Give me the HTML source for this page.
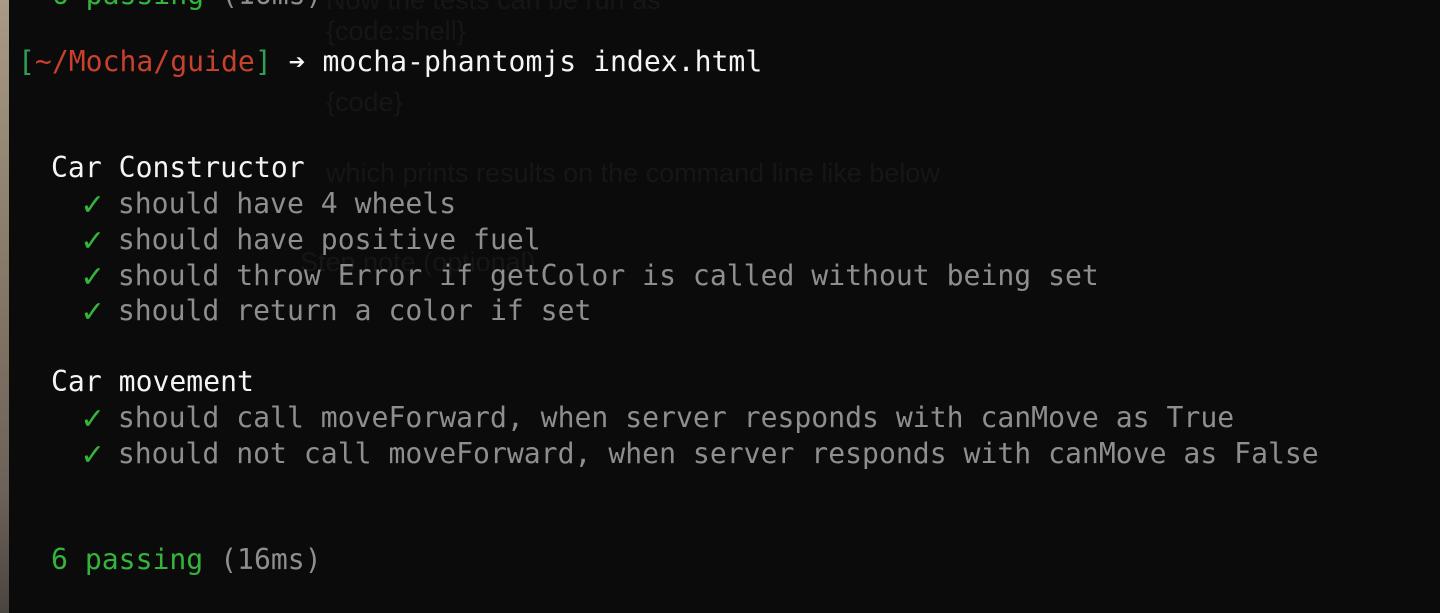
<!DOCTYPE html>
<html><head><meta charset="utf-8"><style>
html,body{margin:0;padding:0;width:1440px;height:613px;overflow:hidden;background:#0b0b0b;}
.strip{position:absolute;left:0;top:0;width:9px;height:613px;background:linear-gradient(#a89a86,#8a7c6a 40%,#6d6259 80%,#4a4440);}
.t{position:absolute;font-family:"DejaVu Sans Mono","Liberation Mono",monospace;font-size:28.1px;line-height:36px;white-space:pre;color:#8e8e8e;}
.g{position:absolute;font-family:"Liberation Sans",sans-serif;font-size:27px;line-height:36px;white-space:pre;color:#161616;}
.w{color:#f4f4f4;}
.gr{color:#35b43c;}
.ck{color:#35b43c;font-weight:bold;display:inline-block;transform:scale(1.2);}
.rd{color:#c8402e;}
.bg{color:#2f9e57;}
</style></head><body>
<div class="strip"></div>
<div class="g" style="left:326px;top:-18px">Now the tests can be run as</div>
<div class="g" style="left:326px;top:13px">{code:shell}</div>
<div class="g" style="left:326px;top:84px">{code}</div>
<div class="g" style="left:326px;top:155px">which prints results on the command line like below</div>
<div class="g" style="left:300px;top:244px">Step note (optional)</div>
<div class="t" style="left:18px;top:-23px"><span class="gr">  6 passing</span> (16ms)</div>
<div class="t" style="left:18px;top:44px"><span class="bg">[</span><span class="rd">~/Mocha/guide</span><span class="bg">]</span> <span class="w">➔ mocha-phantomjs index.html</span></div>
<div class="t w" style="left:51px;top:150px">Car Constructor</div>
<div class="t" style="left:84px;top:186px"><span class="ck">✓</span> should have 4 wheels</div>
<div class="t" style="left:84px;top:222px"><span class="ck">✓</span> should have positive fuel</div>
<div class="t" style="left:84px;top:258px"><span class="ck">✓</span> should throw Error if getColor is called without being set</div>
<div class="t" style="left:84px;top:293px"><span class="ck">✓</span> should return a color if set</div>
<div class="t w" style="left:51px;top:364px">Car movement</div>
<div class="t" style="left:84px;top:400px"><span class="ck">✓</span> should call moveForward, when server responds with canMove as True</div>
<div class="t" style="left:84px;top:436px"><span class="ck">✓</span> should not call moveForward, when server responds with canMove as False</div>
<div class="t" style="left:51px;top:542px"><span class="gr">6 passing</span> (16ms)</div>
</body></html>
